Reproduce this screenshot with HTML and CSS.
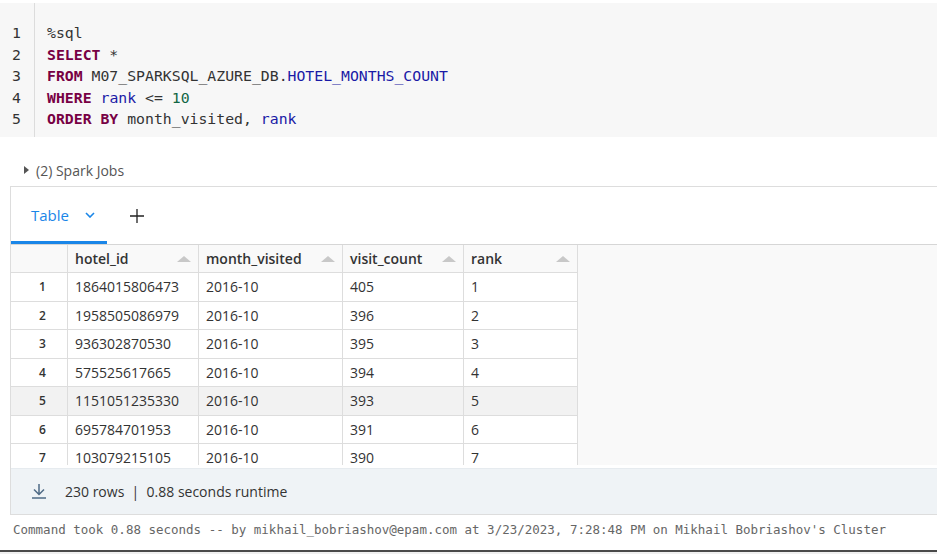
FILE: index.html
```html
<!DOCTYPE html>
<html>
<head>
<meta charset="utf-8">
<link rel="stylesheet" href="styles.css">
</head>
<body>
<div class="cell">
  <div class="code">
    <div class="gutter">
      <div>1</div><div>2</div><div>3</div><div>4</div><div>5</div>
    </div>
    <div class="lines">
      <div class="ln">%sql</div>
      <div class="ln"><span class="kw">SELECT</span> *</div>
      <div class="ln"><span class="kw">FROM</span> M07_SPARKSQL_AZURE_DB.<span class="var">HOTEL_MONTHS_COUNT</span></div>
      <div class="ln"><span class="kw">WHERE</span> <span class="var">rank</span> &lt;= <span class="num">10</span></div>
      <div class="ln"><span class="kw">ORDER BY</span> month_visited, <span class="var">rank</span></div>
    </div>
  </div>

  <div class="jobs"><span class="caret"></span>(2) Spark Jobs</div>

  <div class="output">
    <div class="tabs">
      <div class="tab active">Table
        <svg class="chev" width="10" height="6" viewBox="0 0 10 6"><path d="M1 1 L5 5 L9 1" fill="none" stroke="#1a86e8" stroke-width="1.6"/></svg>
      </div>
      <div class="plus">
        <svg width="14" height="14" viewBox="0 0 14 14"><path d="M7 0 V14 M0 7 H14" stroke="#222" stroke-width="1.3"/></svg>
      </div>
    </div>
    <div class="grid-wrap">
      <table class="grid">
        <thead>
          <tr>
            <th class="idx"></th>
            <th class="c1"><span>hotel_id</span><i class="sort"></i></th>
            <th class="c2"><span>month_visited</span><i class="sort"></i></th>
            <th class="c3"><span>visit_count</span><i class="sort"></i></th>
            <th class="c4"><span>rank</span><i class="sort"></i></th>
          </tr>
        </thead>
        <tbody>
          <tr><td class="idx">1</td><td>1864015806473</td><td>2016-10</td><td>405</td><td>1</td></tr>
          <tr><td class="idx">2</td><td>1958505086979</td><td>2016-10</td><td>396</td><td>2</td></tr>
          <tr><td class="idx">3</td><td>936302870530</td><td>2016-10</td><td>395</td><td>3</td></tr>
          <tr><td class="idx">4</td><td>575525617665</td><td>2016-10</td><td>394</td><td>4</td></tr>
          <tr class="hover"><td class="idx">5</td><td>1151051235330</td><td>2016-10</td><td>393</td><td>5</td></tr>
          <tr><td class="idx">6</td><td>695784701953</td><td>2016-10</td><td>391</td><td>6</td></tr>
          <tr><td class="idx">7</td><td>103079215105</td><td>2016-10</td><td>390</td><td>7</td></tr>
        </tbody>
      </table>
    </div>
    <div class="footer">
      <svg class="dl" width="16" height="15" viewBox="0 0 16 15"><path d="M8 0 V10 M3 5.5 L8 10.5 L13 5.5" fill="none" stroke="#4f6b86" stroke-width="1.5"/><path d="M1 14 H15" stroke="#4f6b86" stroke-width="1.5"/></svg>
      <span class="stats">230 rows&nbsp; | &nbsp;0.88 seconds runtime</span>
    </div>
  </div>

  <div class="cmd">Command took 0.88 seconds -- by mikhail_bobriashov@epam.com at 3/23/2023, 7:28:48 PM on Mikhail Bobriashov's Cluster</div>
</div>
<div class="below"></div>
</body>
</html>
```

FILE: styles.css
```css
html, body {
  margin: 0;
  padding: 0;
  background: #ffffff;
}

.cell {
  padding-top: 3px;
  border-bottom: 2px solid #4a4a4a;
}

.code {
  display: flex;
  background: #f7f7f7;
  height: 134px;
  font-family: "DejaVu Sans Mono", "Liberation Mono", monospace;
  font-size: 14.8px;
  line-height: 21.6px;
  color: #333;
}

.gutter {
  width: 35px;
  border-right: 1px solid #dcdcdc;
  padding-top: 19px;
  box-sizing: border-box;
  padding-left: 12px;
  color: #333;
}

.lines {
  padding-top: 19px;
  padding-left: 12px;
}

.ln {
  white-space: pre;
}

.kw {
  color: #770044;
  font-weight: bold;
}

.var {
  color: #1a1aa6;
}

.num {
  color: #116644;
}

.jobs {
  display: flex;
  align-items: center;
  height: 24px;
  margin-top: 21px;
  padding-left: 24px;
  font-family: "Segoe UI", "Open Sans", sans-serif;
  font-size: 14px;
  color: #555;
}

.caret {
  width: 0;
  height: 0;
  border-top: 4px solid transparent;
  border-bottom: 4px solid transparent;
  border-left: 5px solid #555;
  margin-right: 7px;
}

.output {
  margin-top: 4px;
  margin-left: 10px;
  border-top: 1px solid #dddddd;
  border-left: 1px solid #dddddd;
  border-bottom: 1px solid #dddddd;
  font-family: "Segoe UI", "Open Sans", sans-serif;
}

.tabs {
  display: flex;
  align-items: stretch;
  height: 57px;
}

.tab {
  display: flex;
  align-items: center;
  width: 96px;
  box-sizing: border-box;
  padding-left: 20px;
  padding-top: 2px;
  font-size: 15px;
  color: #1a86e8;
  border-bottom: 3px solid #1a86e8;
}

.chev {
  margin-left: 16px;
}

.plus {
  display: flex;
  align-items: center;
  padding-left: 23px;
}

.grid-wrap {
  height: 220px;
  overflow: hidden;
  background: #f9f9f9;
  border-top: 1px solid #d6d6d6;
}

.grid {
  border-collapse: collapse;
  table-layout: fixed;
  font-size: 14px;
  color: #333;
}

.grid th, .grid td {
  border-right: 1px solid #dddddd;
  border-bottom: 1px solid #dddddd;
  padding: 0 0 0 7px;
  text-align: left;
  white-space: nowrap;
  overflow: hidden;
}

.grid th {
  height: 27px;
  background: #f9f9f9;
  font-weight: 600;
  color: #333;
  position: relative;
}

.grid td {
  height: 27.5px;
  background: #ffffff;
}

.grid tr.hover td {
  background: #f2f2f2;
}

.grid .idx {
  width: 49px;
  padding: 0 0 0 7px;
  text-align: center;
  font-size: 12px;
  font-weight: 600;
  color: #333;
}

.grid th.idx {
  background: #f9f9f9;
}

.c1 { width: 123px; }
.c2 { width: 136px; }
.c3 { width: 113px; }
.c4 { width: 106px; }

.sort {
  position: absolute;
  right: 7px;
  top: 11px;
  width: 0;
  height: 0;
  border-left: 7px solid transparent;
  border-right: 7px solid transparent;
  border-bottom: 6px solid #c8c8c8;
}

.footer {
  display: flex;
  align-items: center;
  height: 46px;
  margin-top: 3px;
  background: #eff3f6;
  border-top: 1px solid #e6ebef;
  box-sizing: border-box;
  padding-left: 20px;
  font-size: 14px;
  color: #333;
}

.dl {
  margin-right: 18px;
}

.cmd {
  height: 35px;
  line-height: 30px;
  padding-left: 13px;
  font-family: "DejaVu Sans Mono", "Liberation Mono", monospace;
  font-size: 12.5px;
  color: #666;
  white-space: nowrap;
}

.below {
  height: 20px;
  background: #f0f0f0;
}
```
